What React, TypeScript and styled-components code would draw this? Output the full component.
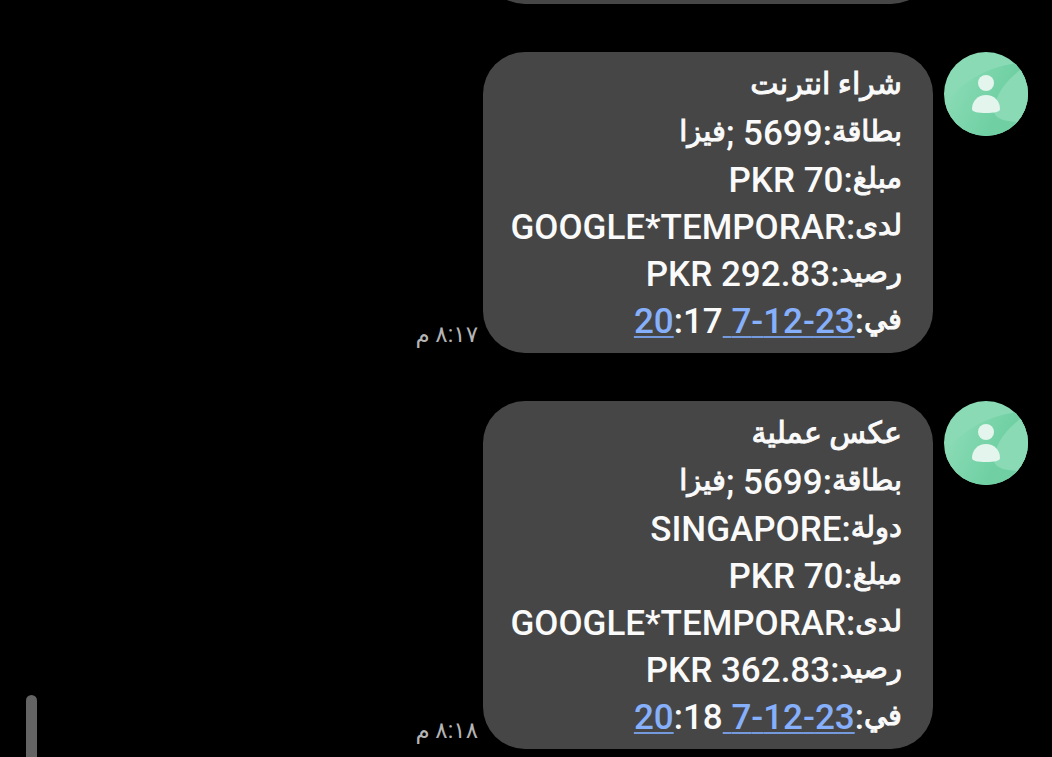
import React, { useId } from "react";
import styled, { createGlobalStyle } from "styled-components";

const GlobalStyle = createGlobalStyle`
  * { box-sizing: border-box; }
  body { margin: 0; background: #000; }
`;

const Conversation = styled.main`
  display: flex;
  flex-direction: column;
  justify-content: flex-end;
  gap: 48px;
  height: 100vh;
  padding: 0 24px 8px;
  overflow: hidden;
  background: #000;
  color: #fafafa;
  font-family: Roboto, "DejaVu Sans", sans-serif;
`;

const MessageRow = styled.article`
  display: flex;
  flex-shrink: 0;
  align-items: flex-start;
`;

const Avatar = styled.svg`
  flex: none;
  width: 84px;
  height: 84px;
  margin-inline-end: 11px;
`;

const Bubble = styled.div`
  flex: 0 1 450px;
  min-width: 0;
  min-height: 120px;
  padding: 11px 31px 8px;
  border-radius: 42px;
  background: #464646;
`;

const Line = styled.p`
  margin: 0;
  height: 47px;
  font-size: 35px;
  font-weight: 500;
  line-height: 47px;
  white-space: nowrap;
`;

const Arabic = styled.span<{ $title?: boolean }>`
  font-size: ${({ $title }) => ($title ? 30 : 29)}px;
  font-weight: 400;
  line-height: 1px;
  vertical-align: 4px;
  -webkit-text-stroke: 1px currentColor;
`;

const DateLink = styled.a`
  color: #86b0fb;
  text-decoration: underline;
  text-decoration-thickness: 2px;
  text-decoration-color: #7499dc;
  text-decoration-skip-ink: none;
  text-underline-offset: 3px;
`;

const Time = styled.time`
  align-self: flex-end;
  margin-inline-start: 5px;
  color: #b4b4b4;
  font-size: 23px;
  line-height: 36px;
  white-space: nowrap;
`;

const ScrollThumb = styled.div`
  position: fixed;
  left: 26px;
  bottom: 0;
  width: 11px;
  height: 62px;
  border-radius: 6px 6px 0 0;
  background: #646464;
`;

function ContactAvatar() {
  const id = useId();
  return (
    <Avatar viewBox="0 0 84 84" aria-hidden="true">
      <defs>
        <clipPath id={`${id}c`}>
          <circle cx="42" cy="42" r="42" />
        </clipPath>
        <linearGradient id={`${id}g`} x1="0" y1="0.2" x2="1" y2="0.6">
          <stop offset="0.1" stopColor="#8adbb5" />
          <stop offset="0.7" stopColor="#70d0a4" />
        </linearGradient>
      </defs>
      <g clipPath={`url(#${id}c)`}>
        <rect width="84" height="84" fill="#8adbb5" />
        <path d="M0 52C18 30 42 13 84 10V84H0Z" fill={`url(#${id}g)`} />
        <path d="M84 13C68 22 53 38 50 56C48 65 57 71 84 70Z" fill="#8adbb5" />
      </g>
      <circle cx="42" cy="31" r="8" fill="#e3f5ec" />
      <path d="M28 57C28 49 34 43 42 43S56 49 56 57C56 60 50 61 42 61S28 60 28 57Z" fill="#e3f5ec" />
    </Avatar>
  );
}

type Field = { label: string; value?: string; tail?: string };
type Message = { fields: Field[]; date?: string; minutes?: string; time: string };

const messages: Message[] = [
  { fields: [], time: "٨:١٦ م" },
  {
    fields: [
      { label: "شراء انترنت" },
      { label: "بطاقة", value: "5699 ;", tail: "فيزا" },
      { label: "مبلغ", value: "PKR 70" },
      { label: "لدى", value: "GOOGLE*TEMPORAR" },
      { label: "رصيد", value: "PKR 292.83" },
    ],
    date: "23-12-7 20",
    minutes: ":17",
    time: "٨:١٧ م",
  },
  {
    fields: [
      { label: "عكس عملية" },
      { label: "بطاقة", value: "5699 ;", tail: "فيزا" },
      { label: "دولة", value: "SINGAPORE" },
      { label: "مبلغ", value: "PKR 70" },
      { label: "لدى", value: "GOOGLE*TEMPORAR" },
      { label: "رصيد", value: "PKR 362.83" },
    ],
    date: "23-12-7 20",
    minutes: ":18",
    time: "٨:١٨ م",
  },
];

export default function App() {
  return (
    <>
      <GlobalStyle />
      <Conversation dir="rtl" lang="ar">
        {messages.map((message) => (
          <MessageRow key={message.time}>
            <ContactAvatar />
            <Bubble>
              {message.fields.map(({ label, value, tail }) => (
                <Line key={label}>
                  <Arabic $title={!value}>{label}</Arabic>
                  {value && `:${value}`}
                  {tail && <Arabic>{tail}</Arabic>}
                </Line>
              ))}
              {message.date && (
                <Line>
                  <Arabic>في</Arabic>:<DateLink href="#event">{message.date}</DateLink>
                  {message.minutes}
                </Line>
              )}
            </Bubble>
            <Time>{message.time}</Time>
          </MessageRow>
        ))}
        <ScrollThumb />
      </Conversation>
    </>
  );
}
